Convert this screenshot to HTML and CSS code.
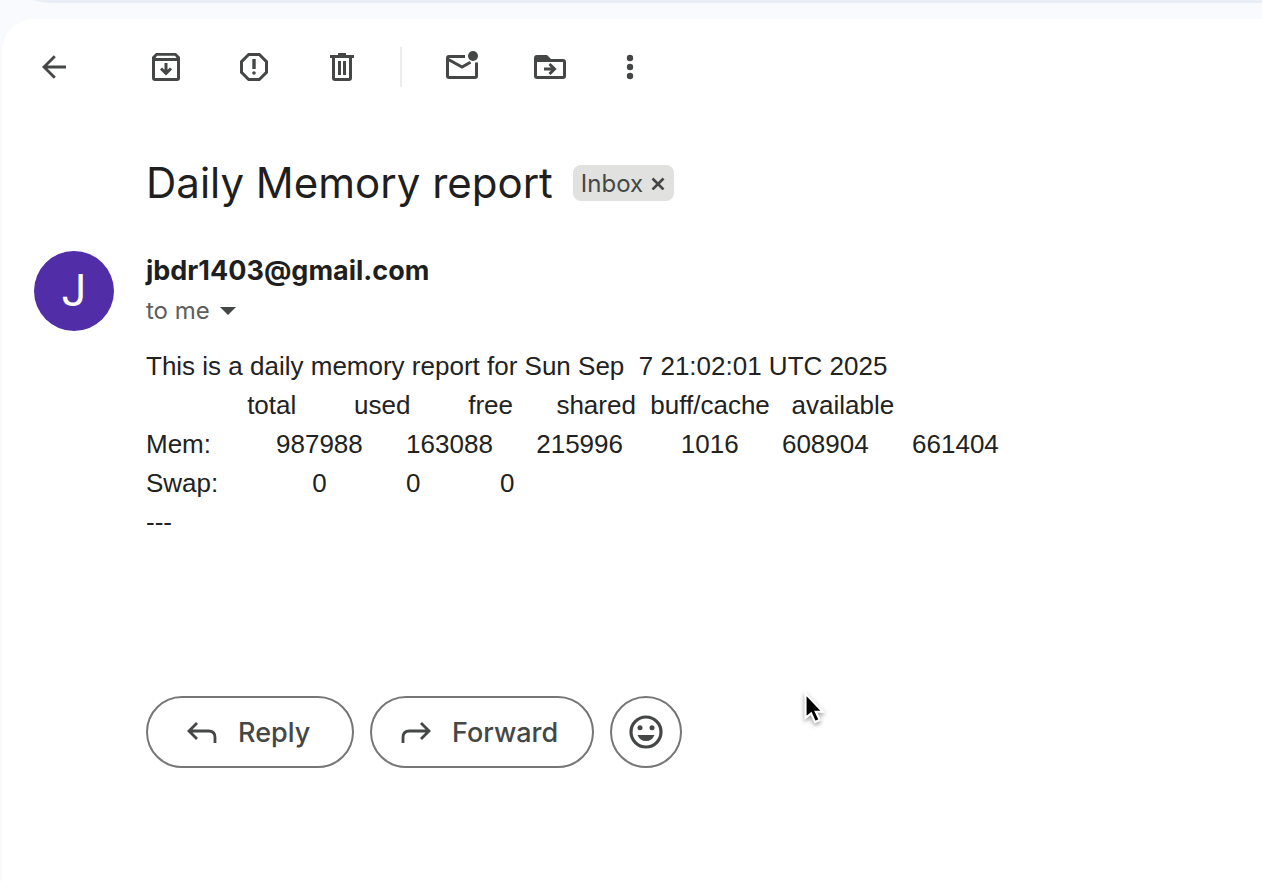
FILE: index.html
```html
<!DOCTYPE html>
<html lang="en">
<head>
<meta charset="utf-8">
<meta name="viewport" content="width=device-width, initial-scale=1">
<title>Daily Memory report</title>
<link rel="stylesheet" href="styles.css">
</head>
<body>
<div class="search-edge"></div>
<main class="card">
  <div class="toolbar" role="toolbar" aria-label="Message actions">
    <button class="tool tool-back" type="button" aria-label="Back">
      <svg class="icon" viewBox="0 0 40 40"><path d="M32 20H10.500M20.800 9.200L10 20L20.800 30.800" fill="none" stroke="currentColor" stroke-width="2.800"/></svg>
    </button>
    <button class="tool" type="button" aria-label="Archive">
      <svg class="icon" viewBox="0 0 40 40"><path fill="currentColor" fill-rule="evenodd" d="M10 6H30L34 10V31Q34 34 31 34H9Q6 34 6 31V10ZM11 8.700L9.500 11H30.500L29 8.700ZM9 14V31H31V14Z"/><path d="M20 16V26M15 21.500L20 26.300L25 21.500" fill="none" stroke="currentColor" stroke-width="3"/></svg>
    </button>
    <button class="tool" type="button" aria-label="Report spam">
      <svg class="icon" viewBox="0 0 40 40"><path d="M14.700 7.500H25.300L32.500 14.700V25.300L25.300 32.500H14.700L7.500 25.300V14.700Z" fill="none" stroke="currentColor" stroke-width="3"/><path d="M18.300 12H21.700V22H18.300Z" fill="currentColor"/><circle cx="20" cy="26" r="1.800" fill="currentColor"/></svg>
    </button>
    <button class="tool" type="button" aria-label="Delete">
      <svg class="icon" viewBox="0 0 40 40"><path fill="currentColor" fill-rule="evenodd" d="M16 6H24V8H32V11H30V31Q30 34 27 34H13Q10 34 10 31V11H8V8H16ZM13 11V31H27V11ZM16 14H19V28H16ZM21 14H24V28H21Z"/></svg>
    </button>
    <span class="divider"></span>
    <button class="tool" type="button" aria-label="Mark as unread">
      <svg class="icon" viewBox="0 0 40 40"><path d="M23 9.500H7Q5.500 9.500 5.500 11V29Q5.500 30.500 7 30.500H33Q34.500 30.500 34.500 29V15.500M5.500 12L20 20L28.500 15.200" fill="none" stroke="currentColor" stroke-width="3"/><circle cx="31" cy="9" r="5" fill="currentColor"/></svg>
    </button>
    <button class="tool" type="button" aria-label="Move to">
      <svg class="icon" viewBox="0 0 40 40"><path fill="currentColor" fill-rule="evenodd" d="M7 8H17L21 12H33Q36 12 36 15V29Q36 32 33 32H7Q4 32 4 29V11Q4 8 7 8ZM7 15V29H33V15Z"/><path d="M14 22H24M19.500 17L24.500 22L19.500 27" fill="none" stroke="currentColor" stroke-width="3"/></svg>
    </button>
    <button class="tool tool-more" type="button" aria-label="More">
      <svg class="icon" viewBox="0 0 40 40"><g fill="currentColor"><circle cx="20" cy="11" r="3.200"/><circle cx="20" cy="20" r="3.200"/><circle cx="20" cy="29" r="3.200"/></g></svg>
    </button>
  </div>

  <header class="subject">
    <h1 class="title">Daily Memory report</h1>
    <span class="label">Inbox
      <button class="label-remove" type="button" aria-label="Remove label Inbox"><svg class="label-x" viewBox="0 0 14 14"><path d="M1.500 2.500L12.500 13.500M12.500 2.500L1.500 13.500" stroke="currentColor" stroke-width="2.600"/></svg></button>
    </span>
  </header>

  <article class="message">
    <div class="avatar">J</div>
    <div class="content">
      <div class="sender">jbdr1403@gmail.com</div>
      <button class="recipient" type="button">to me
        <svg class="caret" viewBox="0 0 16 8"><path d="M0 0H16L8 8Z" fill="currentColor"/></svg>
      </button>
      <pre class="report">This is a daily memory report for Sun Sep  7 21:02:01 UTC 2025
              total        used        free      shared  buff/cache   available
Mem:         987988      163088      215996        1016      608904      661404
Swap:             0           0           0
---</pre>
      <div class="actions">
        <button class="pill" type="button">
          <svg class="icon" viewBox="0 0 40 40"><path d="M33 31V25.500Q33 19 26.500 19H7M15 11L7 19L15 27" fill="none" stroke="currentColor" stroke-width="2.800"/></svg>
          Reply
        </button>
        <button class="pill pill-forward" type="button">
          <svg class="icon" viewBox="0 0 40 40"><path d="M7 31V25.500Q7 19 13.500 19H33M25 11L33 19L25 27" fill="none" stroke="currentColor" stroke-width="2.800"/></svg>
          Forward
        </button>
        <button class="pill pill-round" type="button" aria-label="Add reaction">
          <svg class="icon" viewBox="0 0 40 40"><circle cx="20" cy="20" r="15" fill="none" stroke="currentColor" stroke-width="3.200"/><circle cx="14" cy="15.700" r="2.500" fill="currentColor"/><circle cx="26" cy="15.700" r="2.500" fill="currentColor"/><path d="M11.500 23H28.500Q26 29 20 29T11.500 23Z" fill="currentColor"/></svg>
        </button>
      </div>
    </div>
  </article>
</main>
<svg class="cursor" viewBox="0 0 32 44"><path d="M5 3V31L11.500 26L16 36L21.500 33.500L17 24H25Z" fill="#000" stroke="#fff" stroke-width="2.500"/></svg>
</body>
</html>
```
FILE: styles.css
```css
* { box-sizing: border-box; }

body {
  margin: 0;
  min-height: 100vh;
  display: flex;
  flex-direction: column;
  background: #f8fafd;
  color: #1f1f1f;
  font-family: Inter, "Open Sans", sans-serif;
}

button {
  margin: 0;
  padding: 0;
  border: 0;
  background: none;
  color: inherit;
  font: inherit;
}

.search-edge {
  height: 96px;
  margin: -93px 0 16px 2px;
  border-radius: 48px 0 0 48px;
  background: #e9eef6;
}

.card {
  flex: 1;
  margin-left: 2px;
  padding: 28px 32px;
  border-top-left-radius: 32px;
  background: #fff;
}

.toolbar {
  display: flex;
  align-items: center;
  gap: 48px;
  color: #444746;
}

.tool { display: flex; }
.tool-back { margin-right: 24px; }
.tool-more { margin-left: -8px; }

.icon {
  width: 40px;
  height: 40px;
  flex: none;
}

.divider {
  width: 2px;
  height: 40px;
  margin: 0 -8px 0 -10px;
  background: #ececec;
}

.subject {
  display: flex;
  align-items: center;
  gap: 20px;
  margin: 68px 0 40px 112px;
}

.title {
  margin: 0;
  font-size: 42px;
  line-height: 56px;
  font-weight: 400;
}

.label {
  display: flex;
  align-items: center;
  gap: 8px;
  height: 36px;
  padding: 0 9px 0 8px;
  border-radius: 8px;
  background: #e1e1df;
  color: #444746;
  font-size: 24px;
}

.label-remove { display: flex; }
.label-x { width: 14px; height: 14px; }

.message {
  display: flex;
  gap: 32px;
}

.avatar {
  display: flex;
  align-items: center;
  justify-content: center;
  flex: none;
  width: 80px;
  height: 80px;
  border-radius: 50%;
  background: #512da8;
  color: #fff;
  font-family: Roboto, sans-serif;
  font-size: 44px;
}

.content { flex: 1; }

.sender {
  font-size: 27px;
  line-height: 40px;
  font-weight: 700;
}

.recipient {
  display: flex;
  align-items: center;
  gap: 10px;
  color: #5e5e5e;
  font-size: 24px;
  line-height: 40px;
}

.caret {
  width: 16px;
  height: 8px;
  color: #444746;
}

.report {
  margin: 16px 0 0;
  color: #222;
  font-family: "Liberation Sans", Arial, sans-serif;
  font-size: 26px;
  line-height: 39px;
}

.actions {
  display: flex;
  gap: 16px;
  margin-top: 154px;
  color: #444746;
}

.pill {
  display: flex;
  align-items: center;
  gap: 16px;
  width: 208px;
  height: 72px;
  padding-left: 34px;
  border: 2px solid #747775;
  border-radius: 36px;
  font-size: 27px;
  font-weight: 500;
}

.pill-forward {
  width: 224px;
  padding-left: 24px;
}

.pill-round {
  justify-content: center;
  width: 72px;
  padding: 0;
}

.cursor {
  position: absolute;
  left: 801px;
  top: 691px;
  width: 28px;
  height: 38px;
  filter: drop-shadow(0 2px 2px rgba(0, 0, 0, 0.4));
}
```
